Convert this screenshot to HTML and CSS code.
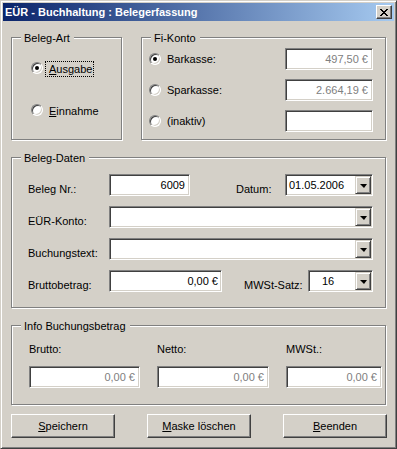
FILE: index.html
```html
<!DOCTYPE html>
<html lang="de">
<head>
<meta charset="utf-8">
<title>EÜR - Buchhaltung : Belegerfassung</title>
<link rel="stylesheet" href="styles.css">
</head>
<body>
<div class="window">
  <div class="titlebar">
    <span class="title">EÜR - Buchhaltung : Belegerfassung</span>
    <span class="close">
      <svg width="8" height="7" viewBox="0 0 8 7" shape-rendering="crispEdges"><path d="M0 0h2v1H0zM6 0h2v1H6zM1 1h2v1H1zM5 1h2v1H5zM2 2h4v1H2zM3 3h2v1H3zM2 4h4v1H2zM1 5h2v1H1zM5 5h2v1H5zM0 6h2v1H0zM6 6h2v1H6z" fill="#000"/></svg>
    </span>
  </div>
  <div class="client">
    <div class="toprow">
      <div class="group g-art">
        <span class="legend">Beleg-Art</span>
        <div class="art-body">
          <div class="radio-row">
            <span class="radio checked"></span>
            <span class="rlabel focus"><u>A</u>usgabe</span>
          </div>
          <div class="radio-row">
            <span class="radio"></span>
            <span class="rlabel"><u>E</u>innahme</span>
          </div>
        </div>
      </div>
      <div class="group g-konto">
        <span class="legend">Fi-Konto</span>
        <div class="konto-body">
          <div class="krow">
            <span class="radio checked"></span>
            <span class="klabel">Barkasse:</span>
            <span class="tb tb-konto disabled">497,50 €</span>
          </div>
          <div class="krow">
            <span class="radio"></span>
            <span class="klabel">Sparkasse:</span>
            <span class="tb tb-konto disabled">2.664,19 €</span>
          </div>
          <div class="krow">
            <span class="radio"></span>
            <span class="klabel">(inaktiv)</span>
            <span class="tb tb-konto"></span>
          </div>
        </div>
      </div>
    </div>

    <div class="group g-daten">
      <span class="legend">Beleg-Daten</span>
      <div class="daten-body">
        <div class="drow">
          <span class="dlabel">Beleg Nr.:</span>
          <span class="tb tb-nr">6009</span>
          <div class="pair">
            <span class="plabel lbl-datum">Datum:</span>
            <span class="combo combo-datum"><span class="ctext">01.05.2006</span><span class="dd"><span class="arrow"></span></span></span>
          </div>
        </div>
        <div class="drow">
          <span class="dlabel">EÜR-Konto:</span>
          <span class="combo combo-wide"><span class="ctext"></span><span class="dd"><span class="arrow"></span></span></span>
        </div>
        <div class="drow">
          <span class="dlabel">Buchungstext:</span>
          <span class="combo combo-wide"><span class="ctext"></span><span class="dd"><span class="arrow"></span></span></span>
        </div>
        <div class="drow">
          <span class="dlabel">Bruttobetrag:</span>
          <span class="tb tb-brutto">0,00 €</span>
          <div class="pair">
            <span class="plabel lbl-mwst">MWSt-Satz:</span>
            <span class="combo combo-mwst"><span class="ctext">16</span><span class="dd"><span class="arrow"></span></span></span>
          </div>
        </div>
      </div>
    </div>

    <div class="group g-info">
      <span class="legend">Info Buchungsbetrag</span>
      <div class="info-body">
        <span class="ilabel">Brutto:</span>
        <span class="ilabel">Netto:</span>
        <span class="ilabel">MWSt.:</span>
        <span class="tb disabled">0,00 €</span>
        <span class="tb disabled">0,00 €</span>
        <span class="tb disabled">0,00 €</span>
      </div>
    </div>

    <div class="buttons">
      <span class="btn"><span><u>S</u>peichern</span></span>
      <span class="btn"><span><u>M</u>aske löschen</span></span>
      <span class="btn"><span><u>B</u>eenden</span></span>
    </div>
  </div>
</div>
</body>
</html>
```

FILE: styles.css
```css
* { box-sizing: border-box; }

body {
  margin: 0;
  background: #d4d0c8;
  font: 11px/13px "Liberation Sans", Arial, sans-serif;
  color: #000;
}

u { text-decoration: underline; text-underline-offset: 1px; }

.window {
  width: 397px;
  height: 449px;
  border: 1px solid;
  border-color: #d4d0c8 #404040 #404040 #d4d0c8;
  box-shadow: inset 1px 1px #fff, inset -1px -1px #808080;
  padding: 2px;
  display: flex;
  flex-direction: column;
  background: #d4d0c8;
}

.titlebar {
  height: 18px;
  flex: none;
  display: flex;
  align-items: center;
  justify-content: space-between;
  padding: 0 2px 0 2px;
  background: linear-gradient(to right, #0a246a, #a6caf0);
  color: #fff;
}

.title {
  font-weight: bold;
  line-height: 18px;
  white-space: nowrap;
}

.close {
  width: 16px;
  height: 14px;
  border: 1px solid;
  border-color: #fff #404040 #404040 #fff;
  box-shadow: inset -1px -1px #808080;
  background: #d4d0c8;
  display: flex;
  align-items: center;
  justify-content: center;
  padding: 0;
}
.close svg { display: block; }

.client {
  flex: 1;
  padding: 16px 8px 0 8px;
  display: flex;
  flex-direction: column;
}

.toprow {
  display: flex;
  gap: 19px;
  height: 103px;
  flex: none;
}

.group {
  position: relative;
  border: 1px solid #808080;
  box-shadow: inset 1px 1px #fff, 1px 1px #fff;
  flex: none;
}

.legend {
  position: absolute;
  top: -6px;
  left: 9px;
  padding: 0 4px 0 3px;
  background: #d4d0c8;
  line-height: 13px;
  white-space: nowrap;
}

.g-art { width: 111px; }
.g-konto { width: 245px; }
.g-daten { margin-top: 17px; height: 151px; }
.g-info { margin-top: 17px; height: 80px; }

/* radios */
.radio {
  width: 12px;
  height: 12px;
  flex: none;
  border-radius: 50%;
  border: 1px solid;
  border-color: #808080 #fff #fff #808080;
  box-shadow: inset 1px 1px #404040, inset -1px -1px #d4d0c8;
  background: #fff;
  position: relative;
}
.radio.checked::after {
  content: "";
  position: absolute;
  left: 3px;
  top: 3px;
  width: 4px;
  height: 4px;
  border-radius: 50%;
  background: #000;
}

.art-body {
  padding: 23px 0 0 19px;
  display: flex;
  flex-direction: column;
  gap: 26px;
}
.radio-row {
  display: flex;
  align-items: flex-start;
  height: 16px;
}
.radio-row .radio { margin-top: 1px; margin-right: 2px; }
.rlabel {
  border: 1px solid transparent;
  padding: 0 1px 0 3px;
  line-height: 14px;
}
.rlabel.focus { border: 1px dotted #000; }

.konto-body {
  padding: 10px 12px 0 7px;
  display: flex;
  flex-direction: column;
  gap: 9px;
}
.krow {
  display: flex;
  align-items: center;
  height: 22px;
}
.krow .radio { margin-right: 6px; }
.klabel { flex: 1; }

/* text boxes */
.tb {
  display: block;
  height: 22px;
  border: 1px solid;
  border-color: #808080 #fff #fff #808080;
  box-shadow: inset 1px 1px #404040, inset -1px -1px #d4d0c8;
  background: #fff;
  padding: 0 4px 0 3px;
  line-height: 20px;
  text-align: right;
  white-space: nowrap;
  flex: none;
}
.tb.disabled { color: #808080; }
.tb-konto { width: 88px; }
.tb-nr { width: 81px; }
.tb-brutto { width: 113px; padding-right: 3px; }

/* combos */
.combo {
  display: flex;
  height: 22px;
  border: 1px solid;
  border-color: #808080 #fff #fff #808080;
  box-shadow: inset 1px 1px #404040, inset -1px -1px #d4d0c8;
  background: #fff;
  padding: 1px;
  flex: none;
}
.ctext {
  flex: 1;
  line-height: 18px;
  padding-left: 2px;
  white-space: nowrap;
}
.dd {
  width: 16px;
  height: 18px;
  flex: none;
  border: 1px solid;
  border-color: #d4d0c8 #404040 #404040 #d4d0c8;
  box-shadow: inset 1px 1px #fff, inset -1px -1px #808080;
  background: #d4d0c8;
  display: flex;
  align-items: center;
  justify-content: center;
}
.arrow {
  width: 0;
  height: 0;
  border-left: 4px solid transparent;
  border-right: 3px solid transparent;
  border-top: 4px solid #000;
  margin-top: 1px;
}
.combo-datum { width: 88px; }
.combo-wide { width: 264px; }
.combo-mwst { width: 65px; }
.combo-mwst .ctext { padding-left: 12px; }

.daten-body {
  padding: 16px 12px 0 16px;
  display: flex;
  flex-direction: column;
  gap: 10px;
}
.drow {
  display: flex;
  height: 22px;
}
.dlabel {
  width: 81px;
  flex: none;
  align-self: flex-end;
  white-space: nowrap;
}
.pair {
  margin-left: auto;
  display: flex;
}
.plabel {
  align-self: flex-end;
  flex: none;
  white-space: nowrap;
}
.lbl-datum { width: 49px; }
.lbl-mwst { width: 64px; }

.info-body {
  padding: 17px 0 0 17px;
  display: grid;
  grid-template-columns: 111px 112px 96px;
  column-gap: 17px;
  row-gap: 10px;
}

.buttons {
  margin-top: 9px;
  width: 376px;
  display: flex;
  justify-content: space-between;
  flex: none;
}
.btn {
  width: 104px;
  height: 24px;
  border: 1px solid;
  border-color: #fff #404040 #404040 #fff;
  box-shadow: inset -1px -1px #808080;
  background: #d4d0c8;
  display: flex;
  align-items: center;
  justify-content: center;
  white-space: nowrap;
  padding-top: 1px;
}
```
